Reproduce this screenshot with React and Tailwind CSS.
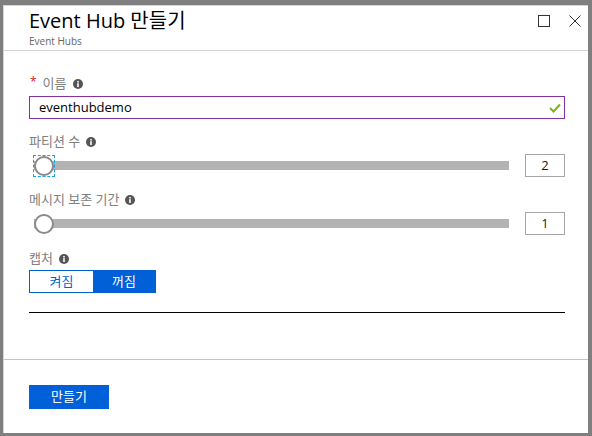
import React from 'react';

const font = { fontFamily: '"Open Sans", "Noto Sans CJK KR", sans-serif' };

function Info() {
    return (
        <svg width="10" height="10" viewBox="0 0 10 10" className="ml-[6px] shrink-0">
            <circle cx="5" cy="5" r="5" fill="#555" />
            <rect x="4.2" y="4.2" width="1.6" height="3.8" fill="#fff" />
            <rect x="4.2" y="2" width="1.6" height="1.5" fill="#fff" />
        </svg>
    );
}

function Label({ children, required, className = '' }) {
    return (
        <div className={`flex items-center h-[18px] text-[13px] text-[#808080] ${className}`}>
            {required && <span className="text-[#e3101e] text-[12px] mr-[6px] -mt-[4px] ml-[1px]">*</span>}
            <span>{children}</span>
            <Info />
        </div>
    );
}

function Slider({ value, focused, className = '' }) {
    return (
        <div className={`flex items-center h-[23px] ${className}`}>
            <div className="relative flex-1 ml-[5px] h-[20px] flex items-center">
                <div className="w-full h-[9px] bg-[#b3b3b3]" />
                <div className="absolute left-0 top-0 w-[20px] h-[20px] rounded-full bg-white border-2 border-[#8a8a8a]" />
                {focused && <div className="absolute -left-px -top-px w-[22px] h-[22px] border border-dashed border-[#19a4e6]" />}
            </div>
            <div className="ml-[16px] w-[40px] h-[23px] border border-[#a6a6a6] flex items-center justify-center text-[13px] text-[#1a1a1a]">
                {value}
            </div>
        </div>
    );
}

export default function App() {
    return (
        <div className="w-[592px] h-[436px] bg-[#7f7f7f] pt-[5px] pl-[3px] pr-[4px] pb-[3px]" style={font}>
            <div className="h-full bg-white border-t border-l border-[#d6d6d6] flex flex-col">
                <div className="h-[45px] border-b border-[#d6d6d6] flex justify-between pl-[25px] pr-[7px] shrink-0">
                    <div className="pt-[3px]">
                        <div className="text-[20px] leading-[24px] text-black">Event Hub 만들기</div>
                        <div className="text-[10px] leading-[12px] text-[#666] mt-[2px]">Event Hubs</div>
                    </div>
                    <div className="flex items-start pt-[9px] gap-[19px]">
                        <div className="w-[12px] h-[12px] border border-[#333]" />
                        <svg width="12" height="12" viewBox="0 0 12 12">
                            <path d="M0.5 0.5 L11.5 11.5 M11.5 0.5 L0.5 11.5" stroke="#333" strokeWidth="1" />
                        </svg>
                    </div>
                </div>

                <div className="flex-1 pl-[25px] pr-[23px] pt-[24px]">
                    <Label required>이름</Label>
                    <div className="mt-[3px] h-[23px] border border-[#8332a0] flex items-center pl-[9px] pr-[3px]">
                        <span className="flex-1 text-[13px] text-black">eventhubdemo</span>
                        <svg width="12" height="10" viewBox="0 0 12 10">
                            <path d="M1 5 L4.5 8.5 L11 1.5" stroke="#7ab51d" strokeWidth="2" fill="none" />
                        </svg>
                    </div>

                    <Label className="mt-[14px]">파티션 수</Label>
                    <Slider value="2" focused className="mt-[3px]" />

                    <Label className="mt-[14px]">메시지 보존 기간</Label>
                    <Slider value="1" className="mt-[3px]" />

                    <Label className="mt-[15px]">캡처</Label>
                    <div className="mt-[2px] flex w-[127px] h-[23px] border border-[#0160d8] text-[13px]">
                        <div className="w-[63px] flex items-center justify-center text-[#0160d8] bg-white">켜짐</div>
                        <div className="flex-1 flex items-center justify-center text-white bg-[#0160d8]">꺼짐</div>
                    </div>

                    <div className="mt-[19px] h-px bg-black" />
                </div>

                <div className="h-[74px] border-t border-[#c4c4c4] pl-[25px] pt-[25px] shrink-0">
                    <button className="w-[80px] h-[24px] bg-[#0160d8] text-white text-[13px] flex items-center justify-center">
                        만들기
                    </button>
                </div>
            </div>
        </div>
    );
}
